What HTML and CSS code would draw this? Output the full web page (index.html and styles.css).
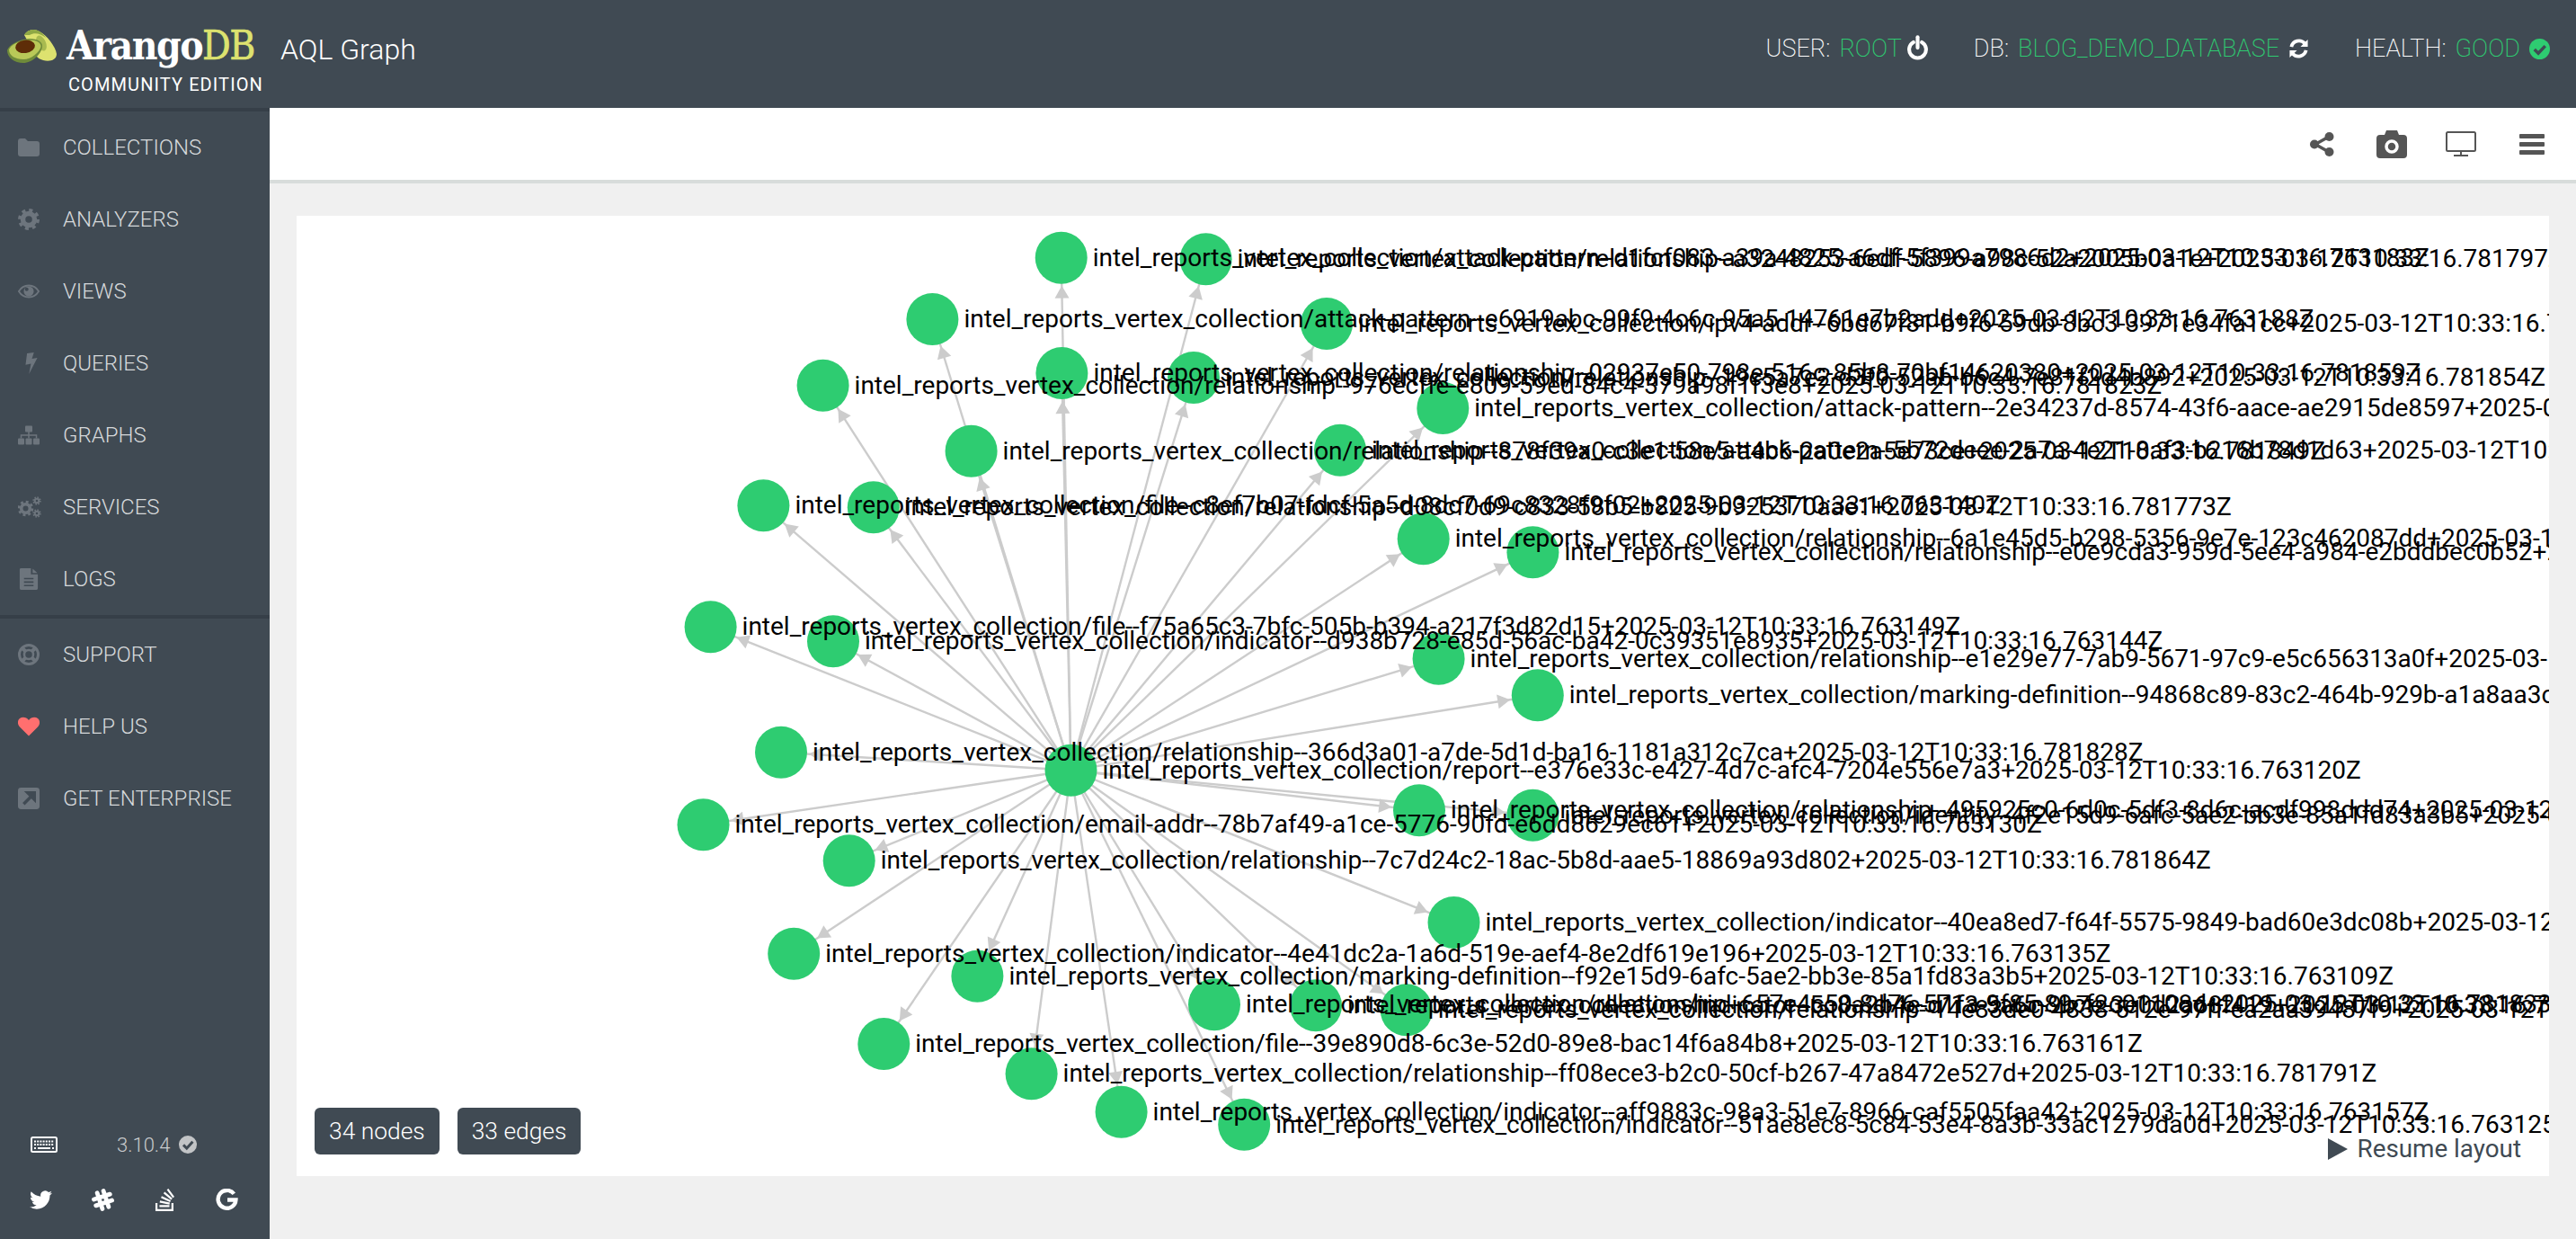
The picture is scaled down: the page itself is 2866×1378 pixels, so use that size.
FILE: index.html
```html
<!DOCTYPE html>
<html lang="en">
<head>
<meta charset="utf-8">
<title>ArangoDB AQL Graph</title>
<link rel="stylesheet" href="styles.css">
</head>
<body>
<header class="topbar">
  <div class="brand">
    <svg class="avocado" viewBox="0 0 80 56" aria-hidden="true">
      <path d="M27 15C30 9 38 7 44 11C52 15 62 28 63 36C63 43 55 45 48 43C44 42 42 40 40 38Z" fill="#dde26f"/>
      <path d="M27 15C30 9 38 7 44 11C47 13 49 15 51 18C45 13 38 12 33 15Z" fill="#8fa845"/>
      <ellipse cx="46" cy="24" rx="5" ry="9" transform="rotate(-25 46 24)" fill="#a8ba50"/>
      <path d="M8 32C10 26 20 20 33 19C42 19 48 23 47 28C46 36 36 46 26 46C16 46 8 40 8 32Z" fill="#6f8b3a"/>
      <path d="M10 31C12 26 21 21 33 20.500C41 20.500 46 24 45.500 28C44 34 35 42 26 42C17 42 10 38 10 31Z" fill="#b9c958"/>
      <ellipse cx="28" cy="27.800" rx="11" ry="7.200" transform="rotate(-8 28 27.800)" fill="#5e2d08"/>
    </svg>
    <div class="brand-text">
      <div class="wordmark">Arango<span class="wordmark-db">DB</span></div>
      <div class="edition">COMMUNITY EDITION</div>
    </div>
  </div>
  <div class="page-title">AQL Graph</div>
  <div class="status">
    <span class="status-item"><span>USER:</span><span class="good">ROOT</span>
      <svg class="status-icon power" viewBox="0 0 24 32"><path d="M7 8.5A10 10 0 1 0 17 8.5" fill="none" stroke="#fff" stroke-width="4.4" stroke-linecap="round"/><path d="M12 2.500V15" stroke="#fff" stroke-width="4.400" stroke-linecap="round"/></svg>
    </span>
    <span class="status-item"><span>DB:</span><span class="good">BLOG_DEMO_DATABASE</span>
      <svg class="status-icon refresh" viewBox="0 0 24 24"><path d="M3.500 10A9 9 0 0 1 19 6" fill="none" stroke="#fff" stroke-width="4"/><path d="M22.500 1.500V10H14Z" fill="#fff"/><path d="M20.500 14A9 9 0 0 1 5 18" fill="none" stroke="#fff" stroke-width="4"/><path d="M1.500 22.500V14H10Z" fill="#fff"/></svg>
    </span>
    <span class="status-item"><span>HEALTH:</span><span class="good">GOOD</span>
      <svg class="status-icon check" viewBox="0 0 24 24"><circle cx="12" cy="12" r="12" fill="#2ecc71"/><path d="M6 12.500L10.500 17L18.500 8.500" fill="none" stroke="#404a53" stroke-width="3.600"/></svg>
    </span>
  </div>
</header>
<div class="layout">
  <aside class="sidebar">
    <nav class="nav-group">
      <a class="nav-item"><svg class="nav-icon" viewBox="0 0 24 20"><path d="M0 3a3 3 0 0 1 3-3h5l3 3h10a3 3 0 0 1 3 3v11a3 3 0 0 1-3 3H3a3 3 0 0 1-3-3Z" /></svg>COLLECTIONS</a>
      <a class="nav-item"><svg class="nav-icon" viewBox="0 0 24 24"><circle cx="12" cy="12" r="6.500" fill="none" stroke-width="5.500" class="sv"/><circle cx="12" cy="12" r="10" fill="none" class="sv" stroke-width="4" stroke-dasharray="3.900 3.950"/></svg>ANALYZERS</a>
      <a class="nav-item"><svg class="nav-icon" viewBox="0 0 26 16"><path d="M1 8C4 3 8 1 13 1S22 3 25 8C22 13 18 15 13 15S4 13 1 8Z" fill="none" class="sv" stroke-width="2"/><circle cx="13" cy="8" r="6"/><circle cx="10.500" cy="5.500" r="2.200" class="bgf"/></svg>VIEWS</a>
      <a class="nav-item"><svg class="nav-icon bolt" viewBox="0 0 12 22"><path d="M1.500 1L8.500 0L6.500 6.500L12 5.500L3.500 22L5.500 11.500L0 12.500Z"/></svg>QUERIES</a>
      <a class="nav-item"><svg class="nav-icon" viewBox="0 0 24 21"><rect x="8" width="8" height="7" rx="1"/><rect y="14" width="7" height="7" rx="1"/><rect x="8.500" y="14" width="7" height="7" rx="1"/><rect x="17" y="14" width="7" height="7" rx="1"/><path d="M12 6V14M3.500 14V10.500H20.500V14" fill="none" class="sv" stroke-width="1.500"/></svg>GRAPHS</a>
      <a class="nav-item"><svg class="nav-icon wide" viewBox="0 0 26 23"><circle cx="8.500" cy="13" r="4.800" fill="none" class="sv" stroke-width="3.600"/><circle cx="8.500" cy="13" r="7.300" fill="none" class="sv" stroke-width="3" stroke-dasharray="2.860 2.870"/><circle cx="21" cy="4.500" r="2.300" fill="none" class="sv" stroke-width="2"/><circle cx="21" cy="4.500" r="3.800" fill="none" class="sv" stroke-width="1.800" stroke-dasharray="1.500 1.480"/><circle cx="21" cy="18.500" r="2.300" fill="none" class="sv" stroke-width="2"/><circle cx="21" cy="18.500" r="3.800" fill="none" class="sv" stroke-width="1.800" stroke-dasharray="1.500 1.480"/></svg>SERVICES</a>
      <a class="nav-item"><svg class="nav-icon" viewBox="0 0 21 25"><path d="M1.500 0H13V7H21V23.500A1.500 1.500 0 0 1 19.500 25H1.500A1.500 1.500 0 0 1 0 23.500V1.500A1.500 1.500 0 0 1 1.500 0ZM15 0.500L20.500 5.500H15Z"/><path d="M5 12H16M5 16H16M5 20H16" class="bgs" stroke-width="1.600"/></svg>LOGS</a>
    </nav>
    <nav class="nav-group nav-group-sep">
      <a class="nav-item"><svg class="nav-icon" viewBox="0 0 24 24"><circle cx="12" cy="12" r="10.500" fill="none" class="sv" stroke-width="3"/><circle cx="12" cy="12" r="5" fill="none" class="sv" stroke-width="2.500"/><path d="M4.500 4.500L8.500 8.500M19.500 4.500L15.500 8.500M4.500 19.500L8.500 15.500M19.500 19.500L15.500 15.500" class="sv" stroke-width="4"/></svg>SUPPORT</a>
      <a class="nav-item"><svg class="nav-icon" viewBox="0 0 24 21"><path class="heart" d="M12 21L2 11C-1 8 -0.500 3.500 2 1.500C5 -0.800 9.500 0 12 3.500C14.500 0 19 -0.800 22 1.500C24.500 3.500 25 8 22 11Z"/></svg>HELP US</a>
      <a class="nav-item"><svg class="nav-icon" viewBox="0 0 21 21"><rect width="21" height="21" rx="3"/><path d="M5.500 16L14 7.500M9.500 5H16V11.500Z" class="bgs bgf" stroke-width="3"/></svg>GET ENTERPRISE</a>
    </nav>
    <div class="side-footer">
      <div class="version-row">
        <svg class="keyboard" viewBox="0 0 30 18"><rect x="1" y="1" width="28" height="16" rx="1.500" fill="none" stroke="#fff" stroke-width="2"/><path d="M4 5.500H26M4 9H26" stroke="#fff" stroke-width="2.200" stroke-dasharray="2 1.200"/><path d="M8 13H22" stroke="#fff" stroke-width="2"/><path d="M4 13H6M24 13H26" stroke="#fff" stroke-width="2"/></svg>
        <span class="version">3.10.4</span>
        <svg class="version-check" viewBox="0 0 24 24"><circle cx="12" cy="12" r="12" fill="#c2c4c6"/><path d="M6 12.500L10.500 17L18.500 8" fill="none" stroke="#404a53" stroke-width="3.600"/></svg>
      </div>
      <div class="social-row">
        <svg class="social" viewBox="0 0 24 24"><path fill="#fff" d="M23.953 4.57a10 10 0 01-2.825.775 4.958 4.958 0 002.163-2.723c-.951.555-2.005.959-3.127 1.184a4.92 4.92 0 00-8.384 4.482C7.69 8.095 4.067 6.13 1.64 3.162a4.822 4.822 0 00-.666 2.475c0 1.71.87 3.213 2.188 4.096a4.904 4.904 0 01-2.228-.616v.06a4.923 4.923 0 003.946 4.827 4.996 4.996 0 01-2.212.085 4.936 4.936 0 004.604 3.417 9.867 9.867 0 01-6.102 2.105c-.39 0-.779-.023-1.17-.067a13.995 13.995 0 007.557 2.209c9.053 0 13.998-7.496 13.998-13.985 0-.21 0-.42-.015-.63A9.935 9.935 0 0024 4.59z"/></svg>
        <svg class="social" viewBox="0 0 24 24"><path d="M8.500 3V21M15.500 3V21M3 8.500H21M3 15.500H21" transform="rotate(-18 12 12)" stroke="#fff" stroke-width="4.600" stroke-linecap="round" fill="none"/></svg>
        <svg class="social" viewBox="0 0 24 24"><path fill="#fff" d="M15.725 0l-1.72 1.277 6.39 8.588 1.716-1.277L15.725 0zm-3.94 3.418l-1.369 1.644 8.225 6.85 1.369-1.644-8.225-6.85zm-3.15 4.465l-.905 1.94 9.702 4.517.904-1.94-9.701-4.517zm-1.85 4.86l-.44 2.093 10.473 2.201.44-2.092-10.473-2.203zM1.890 15.470V24h19.190v-8.530h-2.133v6.397H4.021v-6.396H1.890zm4.265 2.133v2.130h10.660v-2.130H6.154Z"/></svg>
        <svg class="social" viewBox="0 0 24 24"><path d="M19.500 5.500A9.500 9.500 0 1 0 21.500 12H12.500" fill="none" stroke="#fff" stroke-width="4.200"/></svg>
      </div>
    </div>
  </aside>
  <main class="main">
    <div class="toolbar">
      <svg class="tool tool-share" viewBox="0 0 27 27"><path d="M21 5L6 13.500L21 22" fill="none" stroke="#555" stroke-width="3.500"/><circle cx="21.500" cy="5" r="5"/><circle cx="5" cy="13.500" r="5"/><circle cx="21.500" cy="22" r="5"/></svg>
      <svg class="tool tool-camera" viewBox="0 0 34 31"><path d="M11 0H23L25 5H30A4 4 0 0 1 34 9V27A4 4 0 0 1 30 31H4A4 4 0 0 1 0 27V9A4 4 0 0 1 4 5H9Z"/><circle cx="17" cy="18" r="6" fill="none" stroke="#fff" stroke-width="3.500"/></svg>
      <svg class="tool tool-monitor" viewBox="0 0 34 28"><rect x="1" y="1" width="32" height="21" rx="1.500" fill="none" stroke="#555" stroke-width="2"/><path d="M17 22V27M9 27H25" stroke="#555" stroke-width="2"/></svg>
      <svg class="tool tool-bars" viewBox="0 0 28 23"><rect width="28" height="5" rx="1"/><rect y="9" width="28" height="5" rx="1"/><rect y="18" width="28" height="5" rx="1"/></svg>
    </div>
    <div class="content">
      <section class="graph-box">
        <svg class="graph" viewBox="330 240 2506 1068">
          <defs>
            <marker id="arrow" markerUnits="userSpaceOnUse" markerWidth="16" markerHeight="16" refX="45" refY="8" orient="auto" overflow="visible"><path d="M0 0L14 8L0 16Z" fill="#ccc"/></marker>
          </defs>
          <g class="edges" marker-end="url(#arrow)">
            <line x1="1191.5" y1="856.7" x2="1180.7" y2="286.7"/>
            <line x1="1191.5" y1="856.7" x2="1341.6" y2="288.3"/>
            <line x1="1191.5" y1="856.7" x2="1037.4" y2="355"/>
            <line x1="1191.5" y1="856.7" x2="1476" y2="360"/>
            <line x1="1191.5" y1="856.7" x2="915.6" y2="428.7"/>
            <line x1="1191.5" y1="856.7" x2="1181.4" y2="415"/>
            <line x1="1191.5" y1="856.7" x2="1328" y2="420"/>
            <line x1="1191.5" y1="856.7" x2="1605.3" y2="454"/>
            <line x1="1191.5" y1="856.7" x2="1080.6" y2="501.7"/>
            <line x1="1191.5" y1="856.7" x2="1491" y2="500.7"/>
            <line x1="1191.5" y1="856.7" x2="849.4" y2="562.3"/>
            <line x1="1191.5" y1="856.7" x2="971.8" y2="564.3"/>
            <line x1="1191.5" y1="856.7" x2="1583.7" y2="599.3"/>
            <line x1="1191.5" y1="856.7" x2="1705.4" y2="614.3"/>
            <line x1="1191.5" y1="856.7" x2="790.6" y2="697.3"/>
            <line x1="1191.5" y1="856.7" x2="927" y2="713.3"/>
            <line x1="1191.5" y1="856.7" x2="1600.6" y2="732.7"/>
            <line x1="1191.5" y1="856.7" x2="1710.8" y2="773.3"/>
            <line x1="1191.5" y1="856.7" x2="869" y2="836.7"/>
            <line x1="1191.5" y1="856.7" x2="1579" y2="901.3"/>
            <line x1="1191.5" y1="856.7" x2="1705.4" y2="906.7"/>
            <line x1="1191.5" y1="856.7" x2="782.5" y2="917.3"/>
            <line x1="1191.5" y1="856.7" x2="944.7" y2="957.3"/>
            <line x1="1191.5" y1="856.7" x2="1617.5" y2="1026"/>
            <line x1="1191.5" y1="856.7" x2="883.2" y2="1060.7"/>
            <line x1="1191.5" y1="856.7" x2="1087.4" y2="1085.7"/>
            <line x1="1191.5" y1="856.7" x2="1351" y2="1117.3"/>
            <line x1="1191.5" y1="856.7" x2="1464" y2="1118.3"/>
            <line x1="1191.5" y1="856.7" x2="1564.7" y2="1123.3"/>
            <line x1="1191.5" y1="856.7" x2="983.3" y2="1161"/>
            <line x1="1191.5" y1="856.7" x2="1147.6" y2="1194.3"/>
            <line x1="1191.5" y1="856.7" x2="1247.6" y2="1236.7"/>
            <line x1="1191.5" y1="856.7" x2="1384.2" y2="1250.7"/>
          </g>
          <g class="nodes">
            <circle cx="1180.7" cy="286.7" r="29"/><circle cx="1341.6" cy="288.3" r="29"/><circle cx="1037.4" cy="355" r="29"/><circle cx="1476" cy="360" r="29"/><circle cx="915.6" cy="428.7" r="29"/><circle cx="1181.4" cy="415" r="29"/><circle cx="1328" cy="420" r="29"/><circle cx="1605.3" cy="454" r="29"/><circle cx="1080.6" cy="501.7" r="29"/><circle cx="1491" cy="500.7" r="29"/><circle cx="849.4" cy="562.3" r="29"/><circle cx="971.8" cy="564.3" r="29"/><circle cx="1583.7" cy="599.3" r="29"/><circle cx="1705.4" cy="614.3" r="29"/><circle cx="790.6" cy="697.3" r="29"/><circle cx="927" cy="713.3" r="29"/><circle cx="1600.6" cy="732.7" r="29"/><circle cx="1710.8" cy="773.3" r="29"/><circle cx="869" cy="836.7" r="29"/><circle cx="1191.5" cy="856.7" r="29"/><circle cx="1579" cy="901.3" r="29"/><circle cx="1705.4" cy="906.7" r="29"/><circle cx="782.5" cy="917.3" r="29"/><circle cx="944.7" cy="957.3" r="29"/><circle cx="1617.5" cy="1026" r="29"/><circle cx="883.2" cy="1060.7" r="29"/><circle cx="1087.4" cy="1085.7" r="29"/><circle cx="1351" cy="1117.3" r="29"/><circle cx="1464" cy="1118.3" r="29"/><circle cx="1564.7" cy="1123.3" r="29"/><circle cx="983.3" cy="1161" r="29"/><circle cx="1147.6" cy="1194.3" r="29"/><circle cx="1247.6" cy="1236.7" r="29"/><circle cx="1384.2" cy="1250.7" r="29"/>
          </g>
          <g class="labels">
            <text x="1215.7" y="295.7">intel_reports_vertex_collection/attack-pattern--d1fcf083-a39a-4825-a6df-5f399a7986d2+2025-03-12T10:33:16.763183Z</text>
            <text x="1376.6" y="297.3">intel_reports_vertex_collection/relationship--a3248253-6edf-5896-a98c-52a2005b0a1e+2025-03-12T10:33:16.781797Z</text>
            <text x="1072.4" y="364">intel_reports_vertex_collection/attack-pattern--e6919abc-99f9-4c6c-95a5-14761e7b2add+2025-03-12T10:33:16.763188Z</text>
            <text x="1511" y="369">intel_reports_vertex_collection/ipv4-addr--6bd67f81-b9f6-59db-8bc3-3971e34fa1cc+2025-03-12T10:33:16.763175Z</text>
            <text x="950.6" y="437.7">intel_reports_vertex_collection/relationship--976ecffe-e809-59ed-84c4-379a98f1f3e8+2025-03-12T10:33:16.781823Z</text>
            <text x="1216.4" y="424">intel_reports_vertex_collection/relationship--02937e50-798e-516c-85b8-70bf14620380+2025-03-12T10:33:16.781859Z</text>
            <text x="1363" y="429">intel_reports_vertex_collection/relationship--19c5a7e2-d3f0-52ab-b6c4-7e81f2d4b892+2025-03-12T10:33:16.781854Z</text>
            <text x="1640.3" y="463">intel_reports_vertex_collection/attack-pattern--2e34237d-8574-43f6-aace-ae2915de8597+2025-03-12T10:33:16.763163Z</text>
            <text x="1115.6" y="510.7">intel_reports_vertex_collection/relationship--878f39a0-c3e1-58e5-a4b6-2a0e2a5e73ce+2025-03-12T10:33:16.781849Z</text>
            <text x="1526" y="509.7">intel_reports_vertex_collection/attack-pattern--5b72dcee-2a7a-4e21-8af3-b216b78d1d63+2025-03-12T10:33:16.763179Z</text>
            <text x="884.4" y="571.3">intel_reports_vertex_collection/file--c8ef7b07-fdcf-5a5d-8dc7-69c8328f9f02+2025-03-12T10:33:16.763140Z</text>
            <text x="1006.8" y="573.3">intel_reports_vertex_collection/relationship--d08cf0d9-c833-58b5-b825-9b925370aae1+2025-03-12T10:33:16.781773Z</text>
            <text x="1618.7" y="608.3">intel_reports_vertex_collection/relationship--6a1e45d5-b298-5356-9e7e-123c462087dd+2025-03-12T10:33:16.781812Z</text>
            <text x="1740.4" y="623.3">intel_reports_vertex_collection/relationship--e0e9cda3-959d-5ee4-a984-e2bddbec0b52+2025-03-12T10:33:16.781836Z</text>
            <text x="825.6" y="706.3">intel_reports_vertex_collection/file--f75a65c3-7bfc-505b-b394-a217f3d82d15+2025-03-12T10:33:16.763149Z</text>
            <text x="962" y="722.3">intel_reports_vertex_collection/indicator--d938b728-e85d-56ac-ba42-0c39351e8935+2025-03-12T10:33:16.763144Z</text>
            <text x="1635.6" y="741.7">intel_reports_vertex_collection/relationship--e1e29e77-7ab9-5671-97c9-e5c656313a0f+2025-03-12T10:33:16.781805Z</text>
            <text x="1745.8" y="782.3">intel_reports_vertex_collection/marking-definition--94868c89-83c2-464b-929b-a1a8aa3c464d+2025-03-12T10:33:16.763104Z</text>
            <text x="904" y="846.2">intel_reports_vertex_collection/relationship--366d3a01-a7de-5d1d-ba16-1181a312c7ca+2025-03-12T10:33:16.781828Z</text>
            <text x="1226.5" y="865.7">intel_reports_vertex_collection/report--e376e33c-e427-4d7c-afc4-7204e556e7a3+2025-03-12T10:33:16.763120Z</text>
            <text x="1614" y="910.3">intel_reports_vertex_collection/relationship--495925c0-6d0c-5df3-8d6c-acdf998ddd74+2025-03-12T10:33:16.781841Z</text>
            <text x="1740.4" y="915.7">intel_reports_vertex_collection/identity--4f2e15d9-6afc-5ae2-bb3e-85a1fd83a3b5+2025-03-12T10:33:16.763102Z</text>
            <text x="817.5" y="926.3">intel_reports_vertex_collection/email-addr--78b7af49-a1ce-5776-90fd-e6dd8629ec61+2025-03-12T10:33:16.763130Z</text>
            <text x="979.7" y="966.3">intel_reports_vertex_collection/relationship--7c7d24c2-18ac-5b8d-aae5-18869a93d802+2025-03-12T10:33:16.781864Z</text>
            <text x="1652.5" y="1035">intel_reports_vertex_collection/indicator--40ea8ed7-f64f-5575-9849-bad60e3dc08b+2025-03-12T10:33:16.763153Z</text>
            <text x="918.2" y="1069.7">intel_reports_vertex_collection/indicator--4e41dc2a-1a6d-519e-aef4-8e2df619e196+2025-03-12T10:33:16.763135Z</text>
            <text x="1122.4" y="1094.7">intel_reports_vertex_collection/marking-definition--f92e15d9-6afc-5ae2-bb3e-85a1fd83a3b5+2025-03-12T10:33:16.763109Z</text>
            <text x="1386" y="1126.3">intel_reports_vertex_collection/relationship--657e4c50-8d76-571a-9f85-89cf2c01108d+2025-03-12T10:33:16.781833Z</text>
            <text x="1499" y="1127.3">intel_reports_vertex_collection/indicator--5c8a2b4e-d1f3-5a6c-9b7e-3e0d2a68f419+2025-03-12T10:33:16.763171Z</text>
            <text x="1599.7" y="1132.3">intel_reports_vertex_collection/relationship--14e83de0-4838-512e-97ff-ea2aa39487f9+2025-03-12T10:33:16.781818Z</text>
            <text x="1018.3" y="1170">intel_reports_vertex_collection/file--39e890d8-6c3e-52d0-89e8-bac14f6a84b8+2025-03-12T10:33:16.763161Z</text>
            <text x="1182.6" y="1203.3">intel_reports_vertex_collection/relationship--ff08ece3-b2c0-50cf-b267-47a8472e527d+2025-03-12T10:33:16.781791Z</text>
            <text x="1282.6" y="1245.7">intel_reports_vertex_collection/indicator--aff9883c-98a3-51e7-8966-caf5505faa42+2025-03-12T10:33:16.763157Z</text>
            <text x="1419.2" y="1259.7">intel_reports_vertex_collection/indicator--51ae8ec8-5c84-53e4-8a3b-33ac1279da0d+2025-03-12T10:33:16.763125Z</text>
          </g>
        </svg>
        <div class="counts">
          <span class="count">34 nodes</span>
          <span class="count">33 edges</span>
        </div>
        <div class="resume"><svg class="resume-icon" viewBox="0 0 22 24"><path d="M0 0L22 12L0 24Z"/></svg>Resume layout</div>
      </section>
    </div>
  </main>
</div>
</body>
</html>
```
FILE: styles.css
```css
* { box-sizing: border-box; }
html, body { margin: 0; height: 100%; }
body { display: flex; flex-direction: column; width: 2866px; height: 1378px; overflow: hidden; font-family: Roboto, "Liberation Sans", sans-serif; background: #f0f0f0; }

.topbar { display: flex; align-items: flex-start; height: 120px; background: #404a53; flex: none; position: relative; }
.brand { width: 300px; height: 120px; flex: none; display: flex; }
.avocado { width: 80px; height: 56px; margin-top: 24px; flex: none; }
.brand-text { margin-left: -6px; }
.wordmark { font-family: "DejaVu Serif", serif; font-stretch: condensed; font-weight: 700; font-size: 44px; line-height: 50px; margin-top: 26px; color: #fff; white-space: nowrap; letter-spacing: -1.5px; }
.wordmark-db { color: #dde26f; font-weight: 400; -webkit-text-stroke: 0.6px #dde26f; }
.edition { font-size: 20px; line-height: 24px; letter-spacing: 1.1px; color: #fff; white-space: nowrap; margin: 6px 0 0 2px; }
.page-title { font-size: 32px; font-weight: 300; color: #fff; line-height: 40px; margin: 35px 0 0 12px; white-space: nowrap; }
.status { margin-left: auto; display: flex; gap: 51px; margin-top: 39px; padding-right: 29px; font-size: 27px; font-weight: 200; line-height: 30px; color: #fff; white-space: nowrap; }
.status-item { display: flex; align-items: center; gap: 10px; }
.good { color: #2ecc71; }
.status-icon { display: block; flex: none; }
.power { width: 23px; height: 30px; margin-left: -4px; }
.refresh { width: 23px; height: 24px; }
.check { width: 23px; height: 23px; }

.layout { flex: 1; display: flex; min-height: 0; }
.sidebar { width: 300px; flex: none; background: #404a53; border-top: 4px solid #363f48; display: flex; flex-direction: column; }
.nav-group-sep { border-top: 4px solid #363f48; }
.nav-item { display: flex; align-items: center; height: 80px; padding-left: 20px; color: #d6d9db; font-size: 24px; font-weight: 300; white-space: nowrap; }
.nav-icon { width: 24px; height: 24px; margin-right: 26px; fill: #6d757d; flex: none; }
.nav-icon.bolt { transform: translateX(3px); }
.nav-icon.wide { width: 26px; margin-right: 24px; }
.sv { stroke: #6d757d; }
.bgs { stroke: #404a53; }
.bgf { fill: #404a53; }
.heart { fill: #ff6f6f; }
.side-footer { margin-top: auto; padding-bottom: 31px; }
.version-row { display: flex; align-items: center; height: 24px; padding-left: 34px; }
.keyboard { width: 30px; height: 18px; flex: none; }
.version { margin-left: 66px; font-size: 22px; font-weight: 300; color: #c9cbcd; }
.version-check { width: 20px; height: 20px; margin-left: 10px; }
.social-row { display: flex; margin-top: 37px; padding-left: 33px; gap: 44px; }
.social { width: 25px; height: 25px; }

.main { flex: 1; min-width: 0; display: flex; flex-direction: column; }
.toolbar { height: 84px; background: #fff; border-bottom: 4px solid #d8dcdb; display: flex; justify-content: flex-end; align-items: center; padding: 0 35px 24px 0; flex: none; }
.tool { fill: #555; display: block; flex: none; margin-top: 24px; }
.tool-share { width: 27px; height: 27px; margin-right: 47px; }
.tool-camera { width: 34px; height: 31px; margin-right: 43px; }
.tool-monitor { width: 34px; height: 28px; margin-right: 48px; }
.tool-bars { width: 28px; height: 23px; }

.content { flex: 1; min-height: 0; padding: 36px 30px 70px 30px; }
.graph-box { position: relative; width: 100%; height: 100%; background: #fff; overflow: hidden; }
.graph { display: block; width: 100%; height: 100%; }
.edges line { stroke: #ccc; stroke-width: 2.400; }
.nodes circle { fill: #2ecc71; }
.labels text { font-family: Roboto, sans-serif; font-size: 28px; font-weight: 400; fill: #000; }
.counts { position: absolute; left: 20px; bottom: 24px; display: flex; gap: 20px; }
.count { display: block; height: 52px; line-height: 52px; padding: 0 16px; background: #404a53; border-radius: 6px; color: #fff; font-size: 26.400px; font-weight: 300; white-space: nowrap; }
.resume { position: absolute; right: 31px; bottom: 12px; display: flex; align-items: center; gap: 11px; font-size: 27.800px; font-weight: 400; color: #404a53; white-space: nowrap; line-height: 36px; }
.resume-icon { width: 22px; height: 24px; fill: #404a53; }
```
